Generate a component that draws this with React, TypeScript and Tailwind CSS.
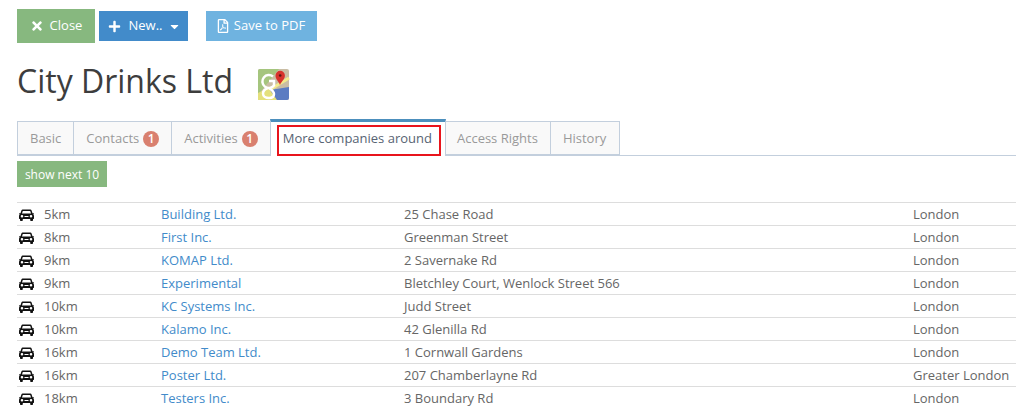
import React from "react";
import { FaCaretDown, FaPlus, FaRegFilePdf, FaTimes } from "react-icons/fa";

const rows = [
  ["5km", "Building Ltd.", "25 Chase Road", "London"],
  ["8km", "First Inc.", "Greenman Street", "London"],
  ["9km", "KOMAP Ltd.", "2 Savernake Rd", "London"],
  ["9km", "Experimental", "Bletchley Court, Wenlock Street 566", "London"],
  ["10km", "KC Systems Inc.", "Judd Street", "London"],
  ["10km", "Kalamo Inc.", "42 Glenilla Rd", "London"],
  ["16km", "Demo Team Ltd.", "1 Cornwall Gardens", "London"],
  ["16km", "Poster Ltd.", "207 Chamberlayne Rd", "Greater London"],
  ["18km", "Testers Inc.", "3 Boundary Rd", "London"],
];

const CarIcon = () => (
  <svg width="15" height="12" viewBox="0 0 15 12" className="mr-[10px] shrink-0 text-[#111]">
    <path
      fill="currentColor"
      fillRule="evenodd"
      d="M3.600 0.500h7.800c.5 0 .9.3 1.100.8l1 3H14.500c.3 0 .5.2.5.5s-.2.5-.5.5h-.3c.5.4.8 1 .8 1.700V9.500c0 .3-.2.5-.5.5H14v1c0 .6-.4 1-1 1h-.8c-.6 0-1-.4-1-1v-1H3.800v1c0 .6-.4 1-1 1H2c-.6 0-1-.4-1-1v-1H.5c-.3 0-.5-.2-.5-.5V7c0-.7.3-1.300.8-1.700H.5C.2 5.300 0 5.100 0 4.800s.2-.5.500-.5H1.500l1-3c.2-.5.6-.8 1.100-.8zM3.800 2L3 4.400h9L11.200 2zM3 6a1.300 1.300 0 1 0 0 2.600A1.300 1.300 0 0 0 3 6zm9 0a1.300 1.300 0 1 0 0 2.600A1.300 1.300 0 0 0 12 6zM5.500 7v1h4V7z"
    />
  </svg>
);

const MapsLogo = () => (
  <svg width="33" height="33" viewBox="0 0 33 33" className="ml-[24px] mt-[7px]">
    <rect x="1" y="1" width="31" height="31" rx="2" fill="#c9bda4" />
    <path d="M1 3a2 2 0 0 1 2-2h19L1 27z" fill="#a5c57e" />
    <path d="M1 32V25L13 19L22 32z" fill="#e4e07c" />
    <path d="M13 22L32 19V30a2 2 0 0 1-2 2H20z" fill="#5b7cc2" />
    <path d="M14 21L32 10" stroke="#f3ea8c" strokeWidth="3" fill="none" />
    <path
      d="M16 8.500a6.500 6.500 0 1 0 1 9V13H12M11 20c-3 1-5 3-5 5.500s2.500 4.500 6 4.500 5-2 5-4-2-4-5-6"
      stroke="#fff"
      strokeWidth="2.500"
      fill="none"
    />
    <path d="M23 17c-1.500-4-4.500-5.500-4.500-9.500a4.700 4.700 0 0 1 9.400 0c0 4-3.400 5.500-4.900 9.500z" fill="#d8322c" />
    <circle cx="23.200" cy="7.500" r="1.300" fill="#5a1512" />
  </svg>
);

const Tab = ({ label, badge, className = "" }: { label: string; badge?: string; className?: string }) => (
  <div className={`flex h-[34px] items-center border border-l-0 border-[#c3cfdd] bg-[#f9f9f9] px-3 pt-px text-[#999] first:border-l last:pr-[13px] ${className}`}>
    {label}
    {badge && (
      <span className="ml-1 flex size-4 items-center justify-center rounded-full bg-[#d9806f] text-[12px] font-semibold text-white">
        {badge}
      </span>
    )}
  </div>
);

export default function App() {
  return (
    <div className="h-[413px] w-[1016px] overflow-hidden bg-white pl-[17px] pt-[9px] font-['Open_Sans',sans-serif] text-[13px] text-[#666]">
      <div className="flex items-center">
        <button className="flex h-[34px] w-[78px] items-center justify-center gap-[6px] bg-[#87b87f] text-white">
          <FaTimes size={14} />
          Close
        </button>
        <button className="ml-1 flex h-[30px] w-[89px] items-center justify-center gap-[8px] bg-[#428bca] pl-px text-white">
          <FaPlus size={13} />
          New..
          <FaCaretDown size={13} className="-ml-[3px]" />
        </button>
        <button className="ml-[18px] flex h-[30px] w-[111px] items-center justify-center gap-[4px] bg-[#6fb3e0] pr-[2px] text-white">
          <FaRegFilePdf size={14} />
          Save to PDF
        </button>
      </div>

      <div className="mt-[16px] flex h-[44px] items-center">
        <h1 className="text-[32px] leading-none text-[#3d3d3d]">City Drinks Ltd</h1>
        <MapsLogo />
      </div>

      <div className="mt-[16px] flex items-end border-b border-[#c3cfdd]">
        <Tab label="Basic" />
        <Tab label="Contacts" badge="1" />
        <Tab label="Activities" badge="1" />
        <div className="relative -mb-px -ml-px flex h-[37px] items-center border-x border-t-[3px] border-x-[#c3cfdd] border-t-[#4c8fbd] bg-white pl-3 pr-[13px] text-[#576373]">
          More companies around
          <span className="absolute bottom-0 left-[6px] right-[4px] top-[3px] border-2 border-[#e8141c]" />
        </div>
        <Tab label="Access Rights" className="pl-[11px]" />
        <Tab label="History" />
      </div>

      <button className="mt-[5px] flex h-[26px] w-[90px] items-center justify-center bg-[#87b87f] pt-px text-[12px] font-medium text-white">
        show next 10
      </button>

      <div className="mt-[15px] border-t border-[#ddd]">
        {rows.map(([distance, name, address, city]) => (
          <div key={name} className="flex h-[23px] items-center border-b border-[#ddd] pl-[2px] pt-px last:border-b-transparent">
            <CarIcon />
            <span className="w-[117px]">{distance}</span>
            <a className="w-[243px] text-[#428bca]">{name}</a>
            <span className="w-[509px]">{address}</span>
            <span>{city}</span>
          </div>
        ))}
      </div>
    </div>
  );
}
